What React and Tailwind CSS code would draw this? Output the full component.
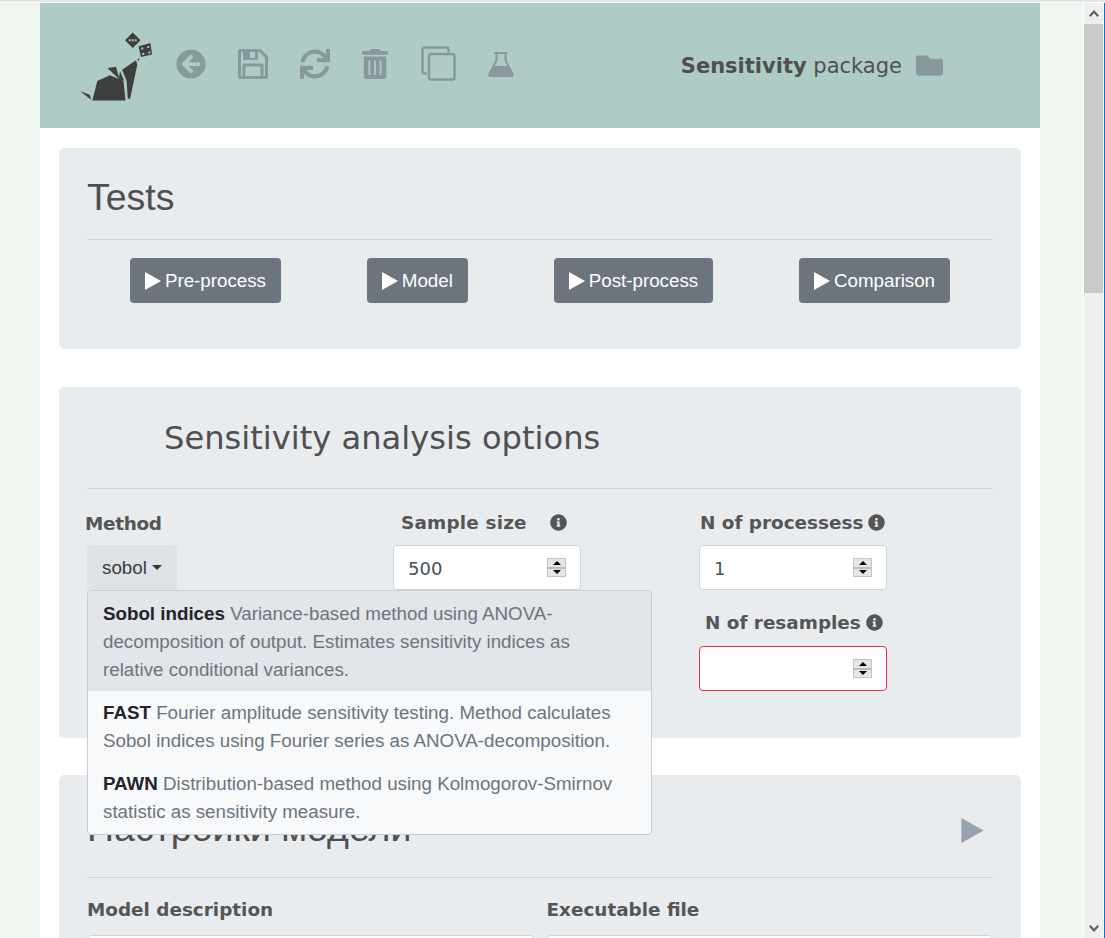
import { FaArrowCircleLeft, FaSync, FaTrashAlt, FaFolder, FaInfoCircle } from 'react-icons/fa'

function Logo() {
  return (
    <svg viewBox="15 0 80 90" width="80" height="90" className="shrink-0" fill="#3e3e3e">
      <polygon points="32.3,79.5 37.3,60 50,54.3 63.5,60 65.5,79.5" />
      <polygon points="47.5,47 56,45.7 59.5,58.5" />
      <polygon points="60,50 64,59.5 58.5,59" />
      <polygon points="20,70 31,78.7 30,74" />
      <polygon points="62,48.7 76,39.3 77.3,43.5 70,78.3 67.7,77.3 66.7,60" />
      <polygon points="77.5,38.5 79.5,36.8 78.5,40.5" />
      <polygon points="72.7,11.5 80.5,19.3 72.7,27 65,19.3" />
      <polygon points="78.5,25.5 90.5,22 92,33.5 81,36" />
      <g fill="#afcbc5">
        <rect x="68.7" y="18.3" width="2" height="2" />
        <rect x="71.7" y="18.3" width="2" height="2" />
        <rect x="74.7" y="18.3" width="2" height="2" />
        <rect x="81.3" y="26.5" width="2" height="2" />
        <rect x="87.3" y="25" width="2" height="2" />
        <rect x="82.3" y="32" width="2" height="2" />
        <rect x="88.3" y="30.5" width="2" height="2" />
      </g>
    </svg>
  )
}

function SaveIcon() {
  return (
    <svg viewBox="0 0 30 30" width="30" height="30" fill="none" stroke="#87999c" strokeWidth="3">
      <path d="M2.5 1.5H22L28.5 8V27.5a1 1 0 0 1-1 1H2.5a1 1 0 0 1-1-1V2.5a1 1 0 0 1 1-1z" />
      <rect x="6" y="16" width="18" height="12.5" />
      <rect x="5" y="1" width="15" height="10" fill="#87999c" stroke="none" />
      <rect x="12" y="3" width="5" height="6" fill="#afcbc5" stroke="none" />
    </svg>
  )
}

function CopyIcon() {
  return (
    <svg viewBox="0 0 35 35" width="35" height="35" fill="none" stroke="#87999c" strokeWidth="2.5">
      <path d="M6 27.5H3.5a2 2 0 0 1-2-2V3.5a2 2 0 0 1 2-2h22a2 2 0 0 1 2 2V6" />
      <rect x="8" y="8" width="25.5" height="25.5" rx="2" />
    </svg>
  )
}

function FlaskIcon() {
  return (
    <svg viewBox="0 0 26 25" width="26" height="25" fill="#87999c">
      <rect x="6" y="0" width="13" height="2" />
      <path d="M8.5 1V8.5L2 21M17.5 1V8.5L24 21" fill="none" stroke="#87999c" strokeWidth="2" />
      <polygon points="6,14 20,14 26,22.5 25,25 1,25 0,22.5" />
    </svg>
  )
}

function Play({ className }) {
  return (
    <svg viewBox="0 0 16 18" className={className} fill="currentColor">
      <polygon points="0,0 16,9 0,18" />
    </svg>
  )
}

function Spinner() {
  return (
    <span className="flex flex-col w-[19px] h-[19px] shrink-0 bg-[#e6e6e6] border border-[#c4c4c4]">
      <span className="flex-1 flex items-center justify-center">
        <svg viewBox="0 0 8 4" width="8" height="4"><polygon points="4,0 8,4 0,4" fill="#000" /></svg>
      </span>
      <span className="h-[2px] bg-[#bdbdbd]" />
      <span className="flex-1 flex items-center justify-center">
        <svg viewBox="0 0 8 4" width="8" height="4"><polygon points="0,0 8,0 4,4" fill="#000" /></svg>
      </span>
    </span>
  )
}

function NumberField({ value, invalid }) {
  return (
    <div className={`flex items-center w-[188px] h-[45px] bg-white rounded-[4px] border pl-[14px] pr-[14px] ${invalid ? 'border-[#dc3545]' : 'border-[#ced4da]'}`}>
      <input
        type="text"
        defaultValue={value}
        className="flex-1 min-w-0 pt-[1px] text-[18px] text-[#495057] outline-none font-['DejaVu_Sans',sans-serif]"
      />
      <Spinner />
    </div>
  )
}

function Label({ children, className = '' }) {
  return (
    <label className={`block text-[18.4px] leading-[24px] font-bold text-[#555] font-['DejaVu_Sans',sans-serif] ${className}`}>
      {children}
    </label>
  )
}

function Info() {
  return <FaInfoCircle size={17} className="shrink-0 -mt-[1px] text-[#555]" />
}

const tests = ['Pre-process', 'Model', 'Post-process', 'Comparison']

const methods = [
  {
    name: 'Sobol indices',
    text: 'Variance-based method using ANOVA-decomposition of output. Estimates sensitivity indices as relative conditional variances.',
    row: 'pt-[9px] pb-[6px] bg-[#e2e5e9] border-b border-[#dfe2e6]',
  },
  {
    name: 'FAST',
    text: 'Fourier amplitude sensitivity testing. Method calculates Sobol indices using Fourier series as ANOVA-decomposition.',
    row: 'pt-[8px] pb-[6px]',
  },
  {
    name: 'PAWN',
    text: 'Distribution-based method using Kolmogorov-Smirnov statistic as sensitivity measure.',
    row: 'pt-[9px] pb-[8px]',
  },
]

export default function App() {
  return (
    <div className="flex flex-col h-[938px] overflow-hidden bg-white font-['Liberation_Sans',sans-serif]">
      <div className="h-[3px] shrink-0 bg-[#e4e4e4] border-b border-white" />
      <div className="flex flex-1 min-h-0">
        <div className="w-[40px] shrink-0 bg-[#f0f7f0]" />

        <main className="w-[1000px] shrink-0 bg-white">
          <header className="flex items-center h-[125px] pl-[35px] pr-[97px] bg-[#afcbc5]">
            <Logo />
            <div className="flex items-center ml-[5px] pb-1 text-[#87999c]">
              <span className="flex justify-center w-[62px]"><FaArrowCircleLeft size={30} /></span>
              <span className="flex justify-center w-[62px]"><SaveIcon /></span>
              <span className="flex justify-center w-[62px]"><FaSync size={30} /></span>
              <span className="flex justify-center w-[58px]"><FaTrashAlt size={30} /></span>
              <span className="flex justify-center w-[68px]"><CopyIcon /></span>
              <span className="flex justify-center w-[58px] pt-[2px]"><FlaskIcon /></span>
            </div>
            <div className="ml-auto flex items-center gap-[14px]">
              <span className="pt-[2px] text-[21px] text-[#4f4f4f] font-['DejaVu_Sans',sans-serif]">
                <b>Sensitivity</b> package
              </span>
              <FaFolder size={27} className="text-[#87999c]" />
            </div>
          </header>

          <div className="px-[19px] pt-[20px]">
            <section className="bg-[#e9ecef] rounded-[5px] px-[28px] pt-[28px] pb-[46px]">
              <h2 className="text-[37.5px] leading-[43px] text-[#4f4f4f]">Tests</h2>
              <hr className="mt-[20px] border-[#d0d4d8]" />
              <div className="flex justify-around mt-[18px]">
                {tests.map((t) => (
                  <button key={t} className="flex items-center gap-[4px] h-[45px] px-[15px] rounded-[4px] bg-[#6c757d] text-white text-[18.75px]">
                    <Play className="w-[16px] h-[18px]" />
                    <span className="pt-[2px]">{t}</span>
                  </button>
                ))}
              </div>
            </section>

            <section className="relative mt-[38px] bg-[#e9ecef] rounded-[5px] px-[28px] pt-[29px] pb-[47px]">
              <h2 className="pl-[77px] text-[32.15px] leading-[44px] text-[#4f4f4f] font-['DejaVu_Sans',sans-serif]">
                Sensitivity analysis options
              </h2>
              <hr className="mt-[28px] border-[#d0d4d8]" />
              <div className="flex mt-[22px]">
                <div className="w-[306px]">
                  <Label className="-ml-[2px] pt-px tracking-[-0.3px]">Method</Label>
                  <button className="flex items-center gap-[5px] mt-[9px] h-[45px] px-[15px] rounded-[4px] bg-[#dee2e6] text-[#343a40] text-[18.75px]">
                    <span className="pt-[2px]">sobol</span>
                    <span className="w-0 h-0 border-x-[5px] border-x-transparent border-t-[5px] border-t-[#343a40]" />
                  </button>
                </div>
                <div className="w-[306px]">
                  <div className="flex items-center pl-[8px] gap-[23px]">
                    <Label className="tracking-[0.2px]">Sample size</Label>
                    <Info />
                  </div>
                  <div className="mt-[10px]"><NumberField value="500" /></div>
                </div>
                <div className="w-[188px]">
                  <div className="flex items-center pl-[1px] gap-[5px] whitespace-nowrap">
                    <Label>N of processess</Label>
                    <Info />
                  </div>
                  <div className="mt-[10px]"><NumberField value="1" /></div>
                  <div className="flex items-center mt-[21px] pl-[6px] gap-[5px] whitespace-nowrap">
                    <Label>N of resamples</Label>
                    <Info />
                  </div>
                  <div className="mt-[11px]"><NumberField invalid /></div>
                </div>
              </div>

              <div className="absolute z-10 left-[28px] top-[203px] w-[565px] bg-[#f8f9fa] border border-[#c8ccd0] rounded-[4px] overflow-hidden">
                {methods.map((m) => (
                  <div key={m.name} className={`pl-[15px] pr-[26px] text-[18.75px] leading-[28px] text-[#6c757d] ${m.row}`}>
                    <b className="text-[#212529]">{m.name}</b> {m.text}
                  </div>
                ))}
              </div>
            </section>

            <section className="mt-[37px] bg-[#e9ecef] rounded-[5px] px-[28px] pt-[32px]">
              <div className="flex items-center justify-between">
                <h2 className="text-[37.5px] leading-[43px] text-[#4f4f4f]">Настройки модели</h2>
                <Play className="w-[23px] h-[25px] mt-[4px] mr-[9px] text-[#98a2ad]" />
              </div>
              <hr className="mt-[27px] border-[#d0d4d8]" />
              <div className="grid grid-cols-2 gap-x-[13px] mt-[20px]">
                <div>
                  <Label>Model description</Label>
                  <div className="mt-[13px] h-[45px] bg-white border border-[#ced4da] rounded-[4px]" />
                </div>
                <div>
                  <Label>Executable file</Label>
                  <div className="mt-[13px] h-[45px] bg-white border border-[#ced4da] rounded-[4px]" />
                </div>
              </div>
            </section>
          </div>
        </main>

        <div className="w-[44px] shrink-0 bg-[#f0f7f0] border-r border-white" />

        <aside className="flex flex-col w-[19px] shrink-0 bg-[#efefef] text-[#5f5f5f]">
          <div className="flex items-center justify-center h-[21px] shrink-0">
            <svg viewBox="0 0 10 7" width="10" height="7" fill="none" stroke="currentColor" strokeWidth="2.2"><path d="M.8 6.2 5 1.6l4.2 4.6" /></svg>
          </div>
          <div className="h-[269px] shrink-0 bg-[#c9c9c9]" />
          <div className="flex items-end justify-center flex-1 pb-[6px]">
            <svg viewBox="0 0 10 7" width="10" height="7" fill="none" stroke="currentColor" strokeWidth="2.2"><path d="M.8.8 5 5.4 9.2.8" /></svg>
          </div>
        </aside>
        <div className="flex-1 bg-white border-r border-[#0078d7]" />
      </div>
    </div>
  )
}
